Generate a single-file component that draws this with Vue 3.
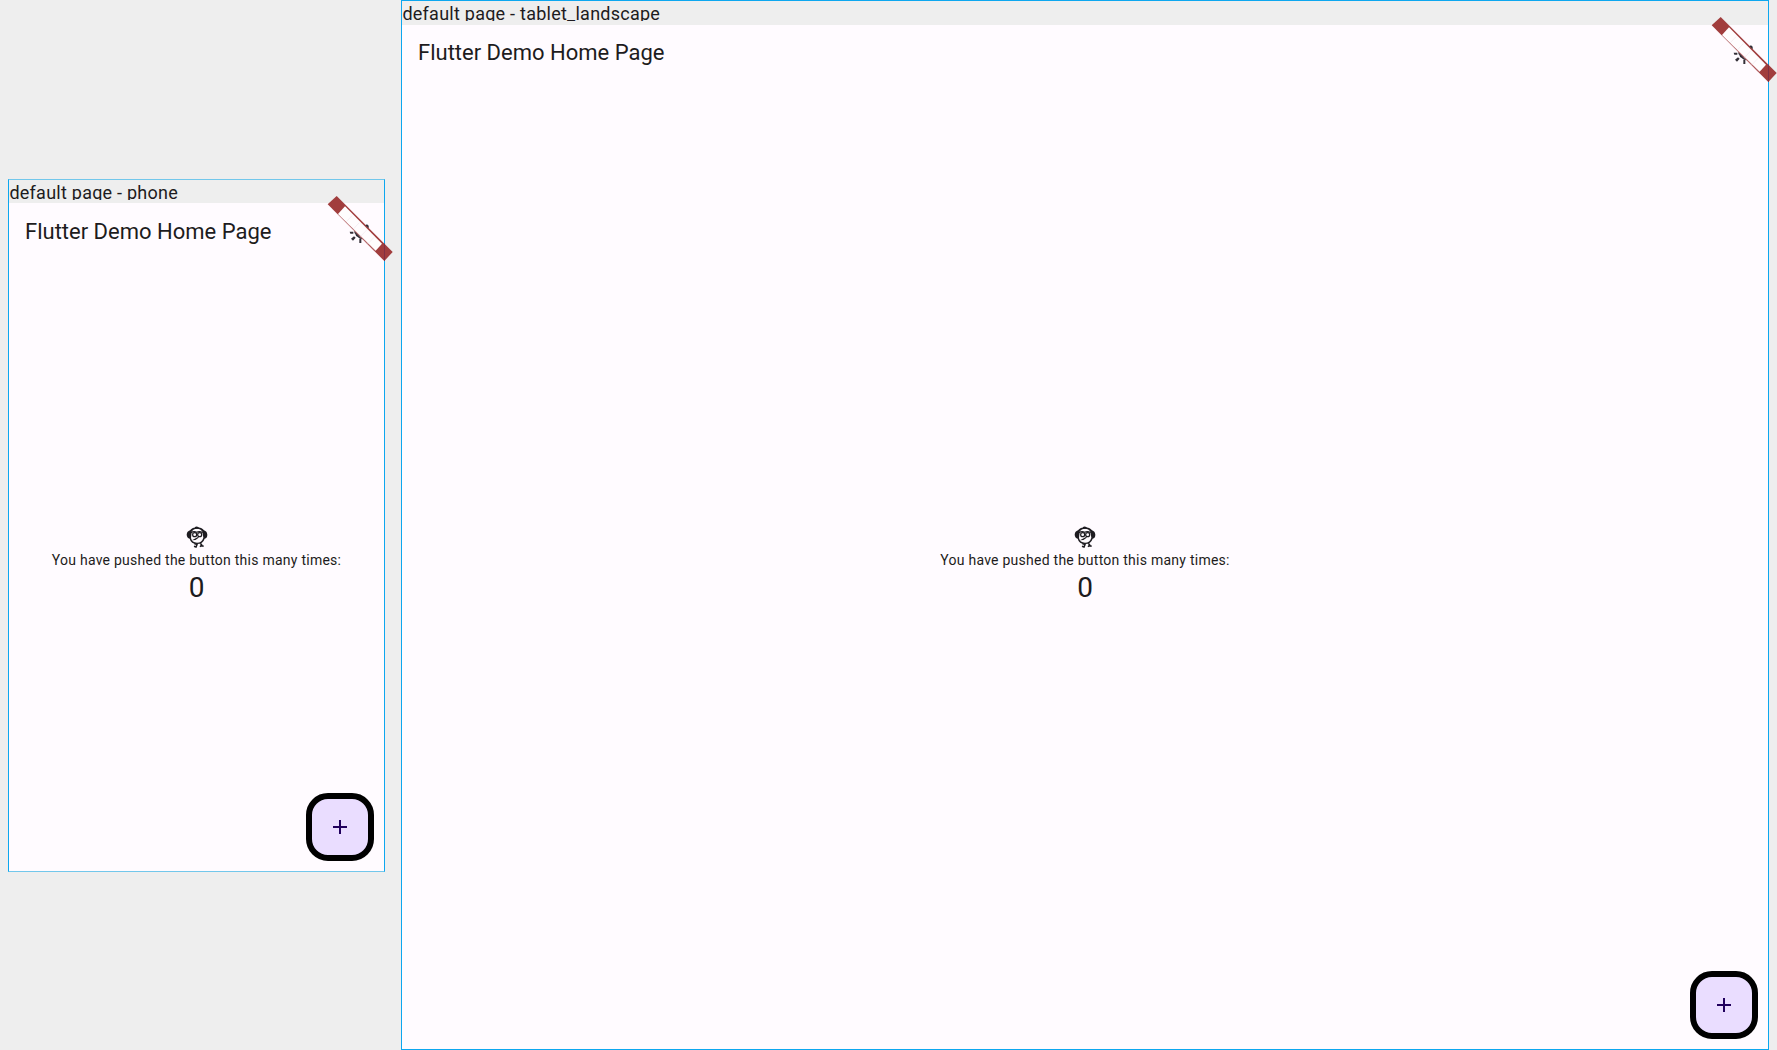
<script setup>
const devices = [
  { id: 'phone', label: 'default page - phone' },
  { id: 'tablet', label: 'default page - tablet_landscape' },
]
</script>

<template>
  <main class="board">
    <section v-for="d in devices" :key="d.id" class="device" :class="d.id">
      <div class="label"><span>{{ d.label }}</span></div>
      <div class="screen">
        <header class="title">Flutter Demo Home Page</header>
        <div class="counter">
          <svg class="dash" width="22" height="22" viewBox="0 0 66 66">
            <path d="M12 13Q19 4 33 4t21 9q9 3 10 13 0 10-8 12-5 16-23 16T11 38Q3 36 2 26q1-10 10-13z" fill="#1d1b20" />
            <path d="M17 17Q22 8 33 8t16 9l3 18q-4 15-19 15T15 36z" fill="#fffbff" />
            <path d="M15 20q9-6 17-1 9-5 18 1" fill="none" stroke="#1d1b20" stroke-width="3.500" />
            <circle cx="26" cy="26" r="6" fill="none" stroke="#1d1b20" stroke-width="3.600" />
            <circle cx="41" cy="26" r="6" fill="none" stroke="#1d1b20" stroke-width="3.600" />
            <path d="M37 32 18 43q13 0 20-8z" fill="#1d1b20" />
            <path d="M27 3q5-4 11 1v4H27z" fill="#1d1b20" />
            <path d="M25 53l8 3-3 7-6-2M43 52l4 5-5 5m4-3 7 2" fill="none" stroke="#1d1b20" stroke-width="4.500" />
          </svg>
          <p>You have pushed the button this many times:</p>
          <strong>0</strong>
        </div>
        <button class="fab" aria-label="Increment">
          <svg width="14" height="14" viewBox="0 0 14 14"><path d="M0 7h14M7 0v14" stroke="#21005d" stroke-width="2" /></svg>
        </button>
      </div>
      <svg class="ribbon" width="70" height="70" viewBox="0 0 210 210">
        <g fill="#332f37">
          <path d="M89 107h11v6H91zM93 128l9-7 5 4-8 9zM118 129h6v12h-6z" />
          <path d="M103 103 128 127v3q-9 0-15-7-6-2-7-9-4-3-3-11z" />
        </g>
        <path d="M50 0 218 168 193 195 23 25z" fill="#a13d3d" />
        <path d="M75 31 186 143 167 164 54 54z" fill="#fffdfe" />
        <path d="M56 56 164 166" stroke="#d8a8ac" stroke-width="3" stroke-dasharray="3 2" />
        <path d="M78 78l18-19M100 99l18-19M122 121l18-19M144 143l18-19" stroke="#f1e9ee" stroke-width="2" />
        <path d="M136 88l5-3 5 4v8z" fill="#332f37" />
        <path d="M193.500 143v52" stroke="#803044" stroke-width="3" />
      </svg>
    </section>
  </main>
</template>

<style>
html, body { margin: 0; overflow: hidden; background: #eee; }
</style>

<style scoped>
.board {
  display: flex;
  align-items: flex-start;
  gap: 16px;
  width: 1777px;
  height: 1050px;
  padding-left: 8px;
  box-sizing: border-box;
  overflow: hidden;
  background: #eee;
  color: #1d1b20;
  font-family: Roboto, sans-serif;
}
.device {
  position: relative;
  display: flex;
  flex: none;
  flex-direction: column;
  box-sizing: border-box;
  border: 1px solid #0da7ef;
}
.phone {
  width: 377px;
  height: 693px;
  margin-top: 179px;
  border-top-color: #72c7eb;
  border-bottom-color: #72c7eb;
}
.tablet { width: 1368px; height: 1050px; }
.label { height: 24px; flex: none; background: #eee; }
.phone .label { height: 23px; }
.label span {
  display: block;
  height: 20px;
  padding-left: 0.4px;
  overflow: hidden;
  font-size: 18px;
  line-height: 25px;
  letter-spacing: 0.25px;
  white-space: nowrap;
}
.phone .label span { line-height: 26px; }
.screen {
  display: grid;
  grid-template: 56px 1fr / 1fr;
  flex: 1;
  min-height: 0;
  background: #fffbff;
}
.title {
  grid-area: 1 / 1;
  padding-left: 16px;
  font-size: 22px;
  line-height: 56px;
  white-space: nowrap;
}
.phone .title { line-height: 58px; }
.counter {
  grid-area: 1 / 1 / 3 / 2;
  display: flex;
  flex-direction: column;
  align-items: center;
  padding-top: 323px;
}
.tablet .counter { padding-top: 501px; }
.dash { display: block; }
.counter p {
  margin: 0;
  font-size: 14px;
  line-height: 24px;
  letter-spacing: 0.25px;
  white-space: nowrap;
}
.counter strong { font-size: 28px; font-weight: 400; line-height: 32px; }
.fab {
  grid-area: 2 / 1;
  align-self: end;
  justify-self: end;
  display: flex;
  align-items: center;
  justify-content: center;
  box-sizing: border-box;
  width: 68px;
  height: 68px;
  margin: 0 10px 10px 0;
  padding: 0;
  border: 6px solid #000;
  border-radius: 22px;
  background: #eaddff;
}
.ribbon {
  position: absolute;
  top: 15.5px;
  right: -5.6px;
  overflow: visible;
}
</style>
